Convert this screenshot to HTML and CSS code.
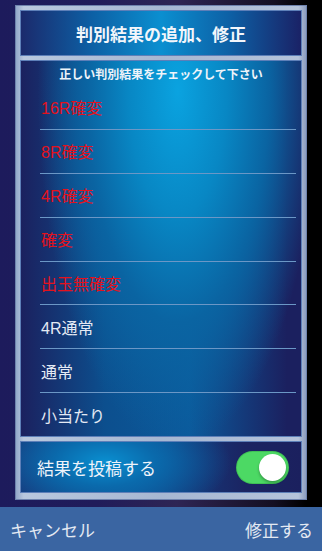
FILE: index.html
```html
<!DOCTYPE html>
<html lang="ja">
<head>
<meta charset="utf-8">
<link rel="stylesheet" href="styles.css">
</head>
<body>
<div class="screen">
  <div class="frame">
    <div class="panel header">判別結果の追加、修正</div>
    <div class="panel list">
      <div class="subtitle">正しい判別結果をチェックして下さい</div>
      <div class="row red">16R確変</div>
      <div class="row red">8R確変</div>
      <div class="row red">4R確変</div>
      <div class="row red">確変</div>
      <div class="row red">出玉無確変</div>
      <div class="row">4R通常</div>
      <div class="row">通常</div>
      <div class="row last">小当たり</div>
    </div>
    <div class="panel post">
      <span class="post-label">結果を投稿する</span>
      <span class="switch"><span class="knob"></span></span>
    </div>
  </div>
  <div class="bar">
    <span class="bar-btn">キャンセル</span>
    <span class="bar-btn">修正する</span>
  </div>
</div>
</body>
</html>
```
FILE: styles.css
```css
html, body {
  margin: 0;
  padding: 0;
}
body {
  width: 322px;
  height: 551px;
  overflow: hidden;
  font-family: "Noto Sans CJK JP", "Liberation Sans", sans-serif;
  background: #000;
}
.screen {
  width: 322px;
  height: 551px;
  display: flex;
  flex-direction: column;
  background: linear-gradient(90deg, #1d1b5c 0%, #201c5a 30%, #2e2554 55%, #140f22 85%, #000 95%);
}
.frame {
  margin: 5px 15px 0 15px;
  height: 495px;
  box-sizing: border-box;
  padding: 5px;
  display: flex;
  flex-direction: column;
  gap: 4px;
  background: linear-gradient(90deg, #8ea3c6 0%, #b9c8de 3%, #a6b7d2 50%, #b5c3da 97%, #8798bb 100%);
  box-shadow: inset 0 0 0 1px #6e82ad;
}
.panel {
  box-sizing: border-box;
  border: 1px solid #5d7fb8;
}
.header {
  height: 46px;
  display: flex;
  align-items: center;
  justify-content: center;
  color: #f2f6fb;
  font-size: 17px;
  font-weight: 700;
  background: linear-gradient(90deg, #1b2a6c 0%, #0d5fa4 25%, #0b8fd0 50%, #0d5fa4 75%, #1a2266 100%);
}
.list {
  height: 377px;
  display: flex;
  flex-direction: column;
  background:
    radial-gradient(ellipse 50% 95% at 56% 8%, #0aa3e0 0%, #0887c4 35%, #0a64a2 65%, rgba(10,60,120,0) 100%),
    linear-gradient(90deg, #1b215f 0%, #0c4f8e 30%, #0b5a9c 60%, #1b205f 95%);
}
.subtitle {
  height: 25px;
  display: flex;
  align-items: center;
  justify-content: center;
  color: #eef4fa;
  font-size: 12px;
  font-weight: 700;
  padding-top: 1px;
  box-sizing: border-box;
}
.row {
  height: 44px;
  margin: 0 5px 0 19px;
  display: flex;
  align-items: center;
  padding-left: 1px;
  color: #e4eaf4;
  font-family: "Liberation Sans", "Noto Sans CJK JP", sans-serif;
  font-size: 16px;
  border-bottom: 1px solid #6b97c6;
  box-sizing: border-box;
}
.row.red {
  color: #e4121d;
}
.row.last {
  border-bottom: none;
  height: 43px;
}
.post {
  height: 52px;
  display: flex;
  align-items: center;
  justify-content: space-between;
  padding: 0 13px 0 16px;
  background:
    radial-gradient(ellipse 45% 120% at 30% 40%, #0a8fd0 0%, #0a6aac 40%, rgba(12,70,130,0) 100%),
    linear-gradient(90deg, #1a2f72 0%, #0d4c90 40%, #1b2462 80%, #1b205e 100%);
}
.post-label {
  color: #eef3fa;
  font-size: 17px;
}
.switch {
  width: 51px;
  height: 31px;
  border-radius: 16px;
  background: #4cd964;
  position: relative;
  box-shadow: 0 0 0 1px #3fc055;
}
.knob {
  position: absolute;
  right: 2px;
  top: 2px;
  width: 27px;
  height: 27px;
  border-radius: 50%;
  background: #fff;
  box-shadow: 0 2px 3px rgba(0,0,0,0.3);
}
.bar {
  margin-top: 7px;
  height: 44px;
  background: #3a65a2;
  display: flex;
  align-items: center;
  justify-content: space-between;
  padding: 0 9px 0 10px;
}
.bar-btn {
  color: #e3e9f2;
  font-size: 17px;
}
```
